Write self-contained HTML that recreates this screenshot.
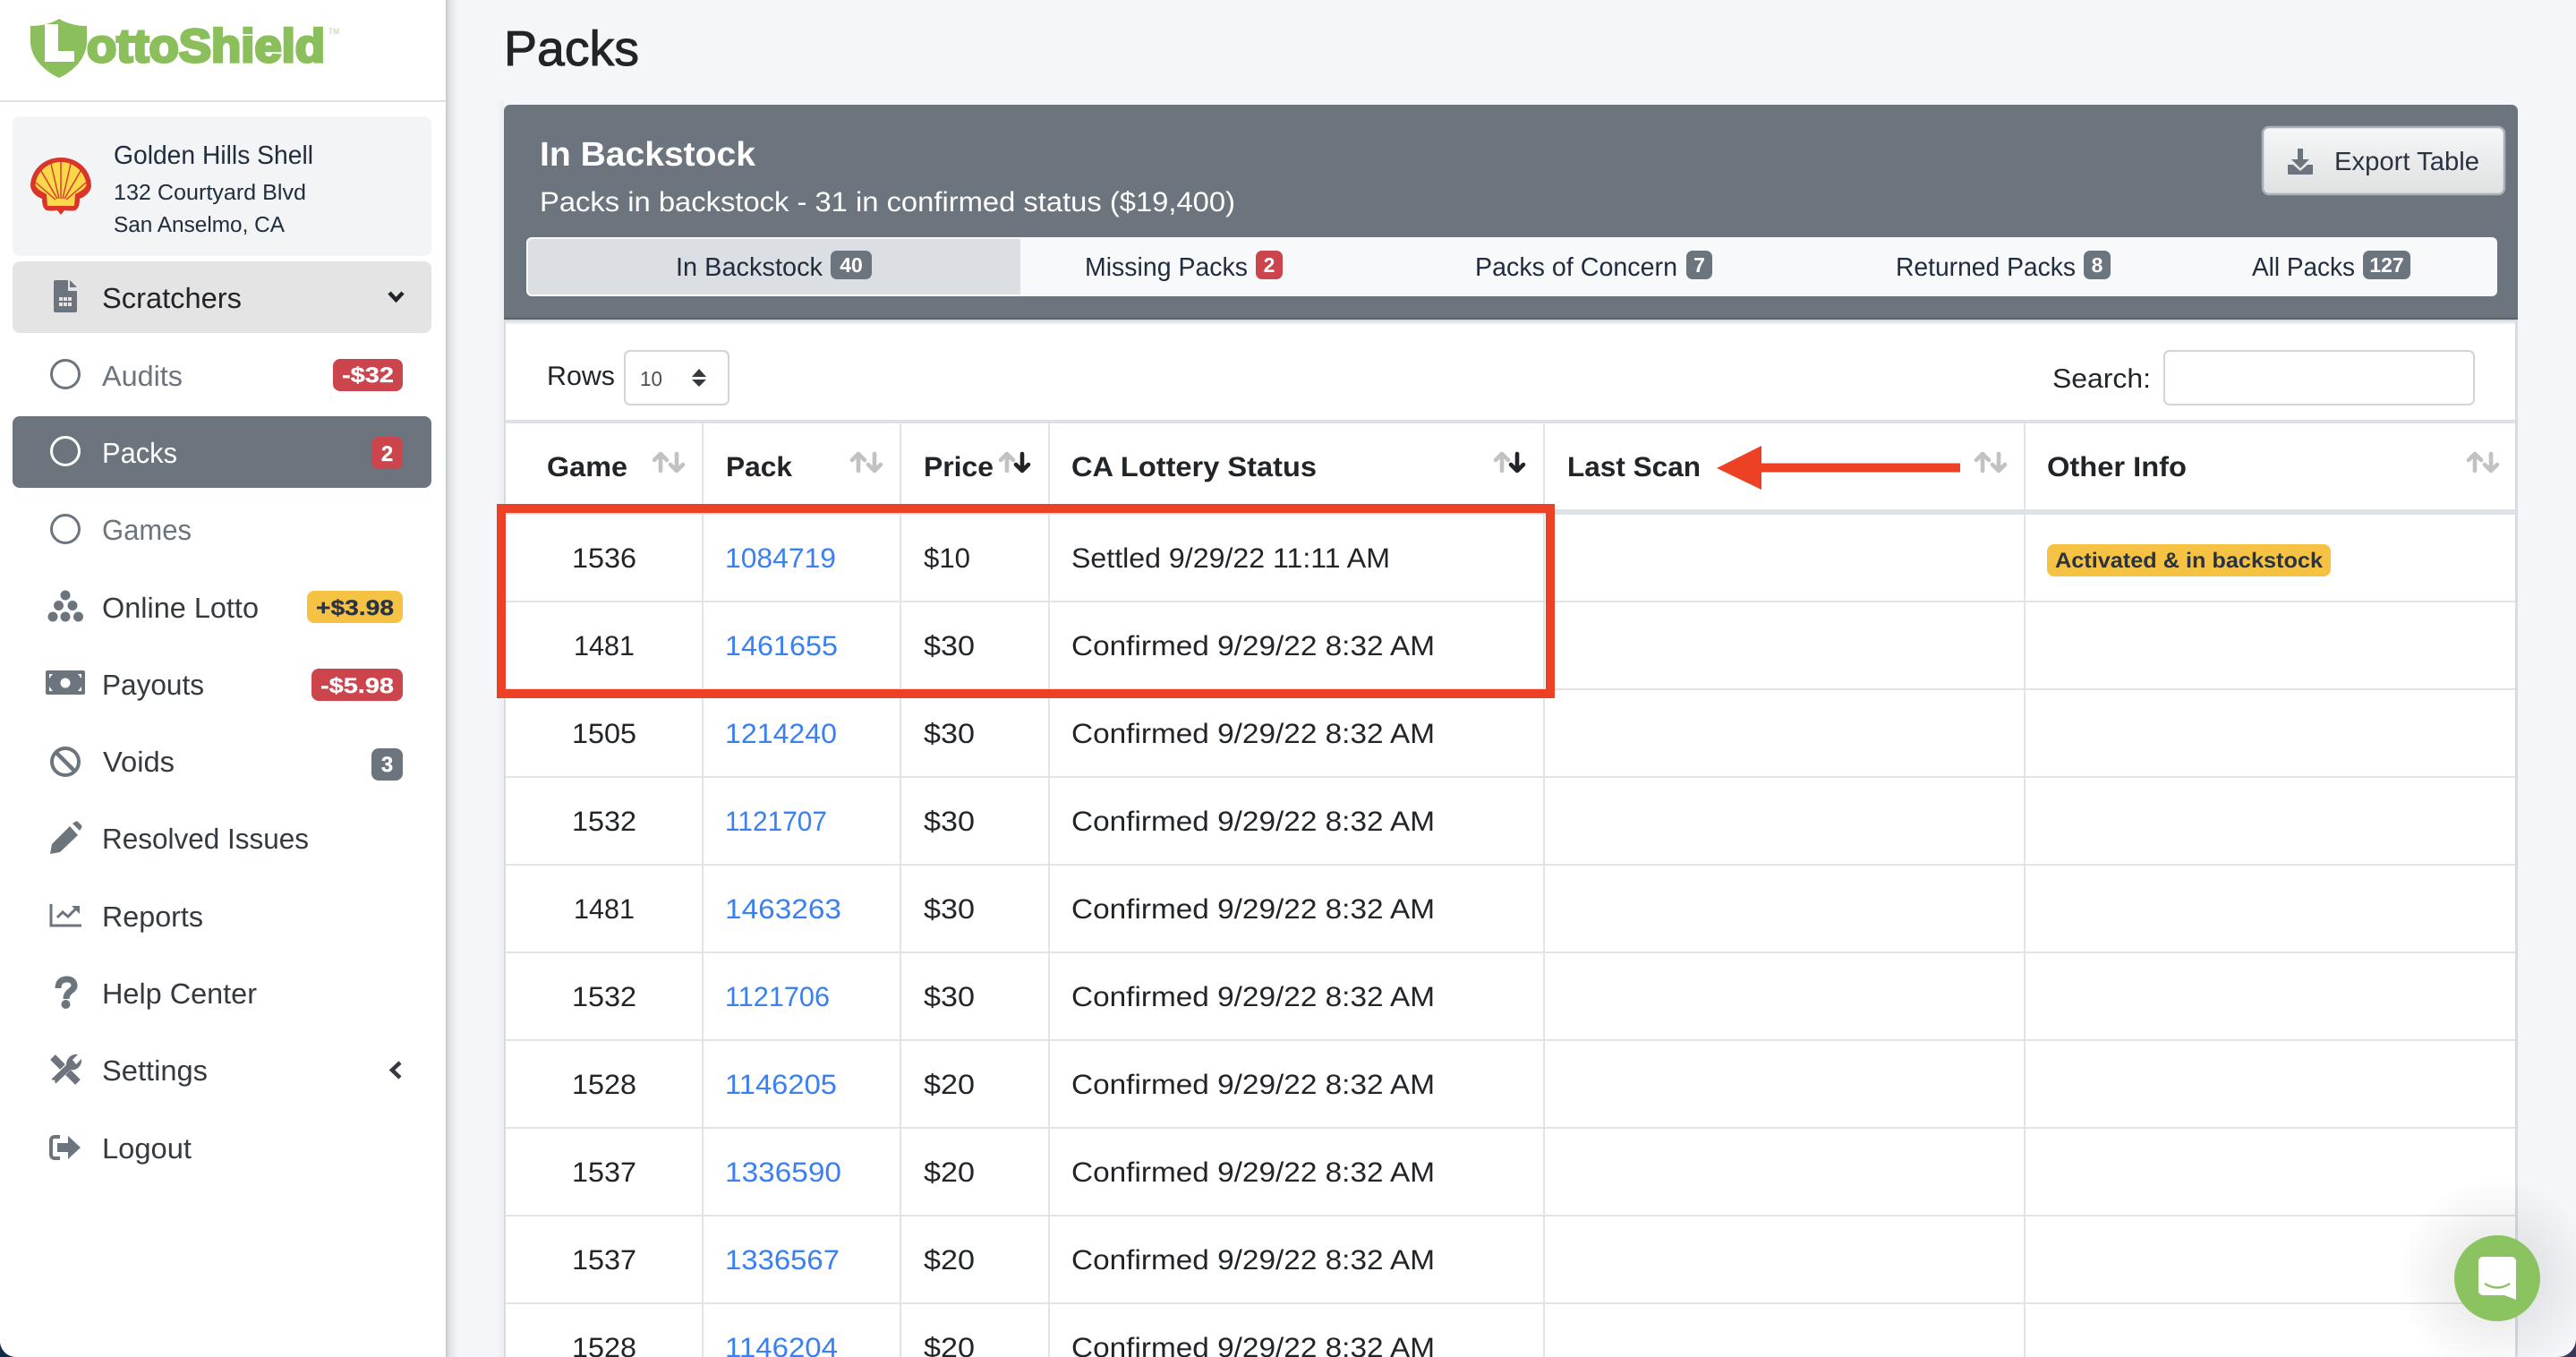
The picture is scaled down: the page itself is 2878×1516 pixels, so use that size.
<!DOCTYPE html>
<html lang="en">
<head>
<meta charset="utf-8">
<title>Packs - LottoShield</title>
<style>
html,body{margin:0;padding:0;background:#f4f6f9;width:2878px;height:1516px;overflow:hidden}
svg{display:block}
text{font-family:"Liberation Sans",sans-serif;text-rendering:geometricPrecision;white-space:pre}
.nav{font-size:32px;fill:#343a40}
.mut{font-size:32px;fill:#6c757d}
.bdg{font-size:24px;font-weight:700;fill:#fff;stroke:#fff;stroke-width:.3}
.tab{font-size:29px;fill:#212d3d}
.tb{font-size:23px;font-weight:700;fill:#fff}
.th{font-size:31px;font-weight:700;fill:#212529}
.td{font-size:31px;fill:#212529}
.lk{font-size:31px;fill:#3a80f2}
.up,.dn{fill:none;stroke:#c2c2c2;stroke-width:4.600;stroke-linecap:round;stroke-linejoin:round}
.dk{fill:none;stroke:#212529;stroke-width:4.600;stroke-linecap:round;stroke-linejoin:round}
</style>
</head>
<body>
<svg xmlns="http://www.w3.org/2000/svg" width="2878" height="1516" viewBox="0 0 2878 1516">
<defs>
<linearGradient id="btn" x1="0" y1="0" x2="0" y2="1"><stop offset="0" stop-color="#f6f7f8"/><stop offset="1" stop-color="#dfe1e1"/></linearGradient>
<linearGradient id="sb" x1="0" y1="0" x2="1" y2="0"><stop offset="0" stop-color="#c4c9d0"/><stop offset=".3" stop-color="#dfe2e8"/><stop offset="1" stop-color="#f4f6f9"/></linearGradient>
<linearGradient id="cs" x1="0" y1="0" x2="1" y2="0"><stop offset="0" stop-color="#f4f6f9"/><stop offset="1" stop-color="#d8dbe0"/></linearGradient>
<linearGradient id="hs" x1="0" y1="0" x2="0" y2="1"><stop offset="0" stop-color="#cfd2d6"/><stop offset="1" stop-color="#ffffff"/></linearGradient>
<radialGradient id="glow"><stop offset=".4" stop-color="#000" stop-opacity=".07"/><stop offset="1" stop-color="#000" stop-opacity="0"/></radialGradient>
</defs>

<!-- page -->
<rect width="2878" height="1516" fill="#f4f6f9"/>

<!-- sidebar -->
<rect x="498" y="0" width="14" height="1516" fill="url(#sb)"/>
<rect x="0" y="0" width="498" height="1516" fill="#fff"/>
<rect x="0" y="112" width="498" height="2" fill="#dee2e6"/>

<!-- logo -->
<path d="M66 21C56 27 45 29 34 29V46C34 63 47 78 66 87C85 78 97 63 97 46V29C86 29 76 27 66 21Z" fill="#8abf5b"/>
<path d="M50 27H65V57H83V69H50Z" fill="#fff"/>
<text x="97" y="69" font-size="52" font-weight="700" fill="#8abf5b" stroke="#8abf5b" stroke-width="3.200" textLength="266" lengthAdjust="spacingAndGlyphs">ottoShield</text>
<text x="367" y="38" font-size="9.500" fill="#b5d69a" textLength="12" lengthAdjust="spacingAndGlyphs">TM</text>

<!-- store card -->
<rect x="14" y="130" width="468" height="156" rx="8" fill="#f2f4f6"/>
<path d="M68 176C47 176 34 192 34 208C35 215 41 220 47 222C47 228 48 233 52 235C57 236 61 235 64 235L68 240L72 235C75 235 80 236 84 235C88 233 89 228 89 222C95 220 101 215 102 208C102 192 89 176 68 176Z" fill="#d9352b"/>
<path d="M68 181C51 181 40 195 39.500 207C42 212 47 214 52 217L53 230H83L84 217C89 214 94 212 96.500 207C96 195 85 181 68 181Z" fill="#fbd848"/>
<g stroke="#d9352b" stroke-width="1.400" fill="none">
<path d="M68 222V181"/><path d="M66 222L57 183"/><path d="M70 222L79 183"/><path d="M64 222L46 191"/><path d="M72 222L90 191"/><path d="M62 223L40 204"/><path d="M74 223L96 204"/>
</g>
<text x="127" y="183" font-size="29" fill="#212d3d" textLength="223" lengthAdjust="spacingAndGlyphs">Golden Hills Shell</text>
<text x="127" y="223" font-size="24.500" fill="#212d3d" textLength="215" lengthAdjust="spacingAndGlyphs">132 Courtyard Blvd</text>
<text x="127" y="259" font-size="24.500" fill="#212d3d" textLength="191" lengthAdjust="spacingAndGlyphs">San Anselmo, CA</text>

<!-- Scratchers -->
<rect x="14" y="292" width="468" height="80" rx="8" fill="#e4e4e4"/>
<path d="M62 313H76V325H86V347A2 2 0 0 1 84 349H62A2 2 0 0 1 60 347V315A2 2 0 0 1 62 313Z" fill="#6c757d"/>
<path d="M78 313L86 321H78Z" fill="#6c757d"/>
<g fill="#e4e4e4"><rect x="66" y="332" width="4" height="4"/><rect x="71" y="332" width="4" height="4"/><rect x="76" y="332" width="4" height="4"/><rect x="66" y="338" width="4" height="4"/><rect x="71" y="338" width="4" height="4"/><rect x="76" y="338" width="4" height="4"/></g>
<text x="114" y="344" font-size="32" fill="#212529" textLength="156" lengthAdjust="spacingAndGlyphs">Scratchers</text>
<path d="M435 327L442.500 335L450 327" fill="none" stroke="#212529" stroke-width="4.500"/>

<!-- Audits -->
<circle cx="73" cy="418" r="15.500" fill="none" stroke="#6c757d" stroke-width="3"/>
<text class="mut" x="114" y="431" textLength="90" lengthAdjust="spacingAndGlyphs">Audits</text>
<rect x="372" y="401" width="78" height="36" rx="8" fill="#cc444c"/>
<text class="bdg" x="382" y="427" textLength="58" lengthAdjust="spacingAndGlyphs">-$32</text>

<!-- Packs -->
<rect x="14" y="465" width="468" height="80" rx="8" fill="#6c757d"/>
<circle cx="73" cy="504" r="15.500" fill="none" stroke="#fff" stroke-width="3"/>
<text x="114" y="517" font-size="32" fill="#fff" textLength="84" lengthAdjust="spacingAndGlyphs">Packs</text>
<rect x="415" y="488" width="35" height="36" rx="8" fill="#cc444c"/>
<text class="bdg" x="432.500" y="515" text-anchor="middle">2</text>

<!-- Games -->
<circle cx="73" cy="591" r="15.500" fill="none" stroke="#6c757d" stroke-width="3"/>
<text class="mut" x="114" y="603" textLength="100" lengthAdjust="spacingAndGlyphs">Games</text>

<!-- Online Lotto -->
<g fill="#6c757d"><circle cx="73" cy="665" r="5.500"/><circle cx="65.500" cy="676.500" r="5.500"/><circle cx="81" cy="676.500" r="5.500"/><circle cx="59" cy="689" r="5.500"/><circle cx="73" cy="689" r="5.500"/><circle cx="87.500" cy="689" r="5.500"/></g>
<text class="nav" x="114" y="690" textLength="175" lengthAdjust="spacingAndGlyphs">Online Lotto</text>
<rect x="343" y="660" width="107" height="36" rx="8" fill="#f5c243"/>
<text class="bdg" x="353" y="687" style="fill:#2a3342;stroke:#2a3342" textLength="87" lengthAdjust="spacingAndGlyphs">+$3.98</text>

<!-- Payouts -->
<rect x="51" y="749" width="44" height="27" rx="2" fill="#6c757d"/>
<circle cx="73" cy="763" r="5.500" fill="#fff"/>
<g fill="#fff"><path d="M55 753H59L55 758Z"/><path d="M91 753H87L91 758Z"/><path d="M55 772H59L55 767Z"/><path d="M91 772H87L91 767Z"/></g>
<text class="nav" x="114" y="776" textLength="114" lengthAdjust="spacingAndGlyphs">Payouts</text>
<rect x="348" y="747" width="102" height="36" rx="8" fill="#cc444c"/>
<text class="bdg" x="358" y="774" textLength="82" lengthAdjust="spacingAndGlyphs">-$5.98</text>

<!-- Voids -->
<circle cx="73" cy="851" r="15" fill="none" stroke="#6c757d" stroke-width="4"/>
<path d="M62.500 840.500L83.500 861.500" stroke="#6c757d" stroke-width="4.500"/>
<text class="nav" x="115" y="862" textLength="80" lengthAdjust="spacingAndGlyphs">Voids</text>
<rect x="415" y="836" width="35" height="36" rx="8" fill="#6c757d"/>
<text class="bdg" x="432.500" y="862" text-anchor="middle">3</text>

<!-- Resolved Issues -->
<path d="M56 954L58 943L78 923L87 933L67 952Z" fill="#6c757d"/>
<path d="M81 920L84 918Q86 917 87 918L91 922Q92 924 91 925L89 928Z" fill="#6c757d"/>
<text class="nav" x="114" y="948" textLength="231" lengthAdjust="spacingAndGlyphs">Resolved Issues</text>

<!-- Reports -->
<path d="M57 1010V1034H91" fill="none" stroke="#6c757d" stroke-width="3"/>
<path d="M64 1025L70 1019L76 1024L85 1015" fill="none" stroke="#6c757d" stroke-width="3"/>
<path d="M80 1012H89V1021Z" fill="#6c757d"/>
<text class="nav" x="114" y="1035" textLength="113" lengthAdjust="spacingAndGlyphs">Reports</text>

<!-- Help -->
<path d="M65 1104C65 1096 70 1094 75 1094C81 1094 83 1098 83 1101C83 1107 74 1107 74 1116" fill="none" stroke="#6c757d" stroke-width="7"/>
<circle cx="73.500" cy="1122" r="5" fill="#6c757d"/>
<text class="nav" x="114" y="1121" textLength="173" lengthAdjust="spacingAndGlyphs">Help Center</text>

<!-- Settings -->
<path d="M59 1181L70 1192" stroke="#6c757d" stroke-width="8"/>
<path d="M76 1198L87 1209" stroke="#6c757d" stroke-width="8"/>
<path d="M60 1208L81 1188" stroke="#6c757d" stroke-width="7"/>
<path d="M74 1190C74 1182 80 1177 87 1178L81 1184L85 1189L91 1183C92 1191 85 1197 78 1195Z" fill="#6c757d"/>
<circle cx="60" cy="1208" r="1.500" fill="#fff"/>
<text class="nav" x="114" y="1207" textLength="118" lengthAdjust="spacingAndGlyphs">Settings</text>
<path d="M447 1187L438 1195.500L447 1204" fill="none" stroke="#343a40" stroke-width="4.500"/>

<!-- Logout -->
<path d="M67 1270H61A4 4 0 0 0 57 1274V1290A4 4 0 0 0 61 1294H67" fill="none" stroke="#6c757d" stroke-width="4"/>
<path d="M64 1277H76V1269L90 1282L76 1295V1287H64Z" fill="#6c757d"/>
<text class="nav" x="114" y="1294" textLength="100" lengthAdjust="spacingAndGlyphs">Logout</text>

<!-- title -->
<text x="563" y="73" font-size="55" fill="#212529" stroke="#212529" stroke-width="1" textLength="151" lengthAdjust="spacingAndGlyphs">Packs</text>

<!-- card -->
<rect x="555" y="112" width="8" height="1404" fill="url(#cs)" opacity=".3"/>
<rect x="563" y="117" width="2250" height="1410" rx="7" fill="#d8dbe0"/>
<rect x="565" y="120" width="2245" height="1400" fill="#fff"/>
<path d="M563 357V124A7 7 0 0 1 570 117H2806A7 7 0 0 1 2813 124V357Z" fill="#6c757d"/>
<rect x="563" y="355" width="2250" height="2" fill="#5c636a"/>
<rect x="565" y="357" width="2245" height="6" fill="url(#hs)"/>
<text x="603" y="185" font-size="38" font-weight="700" fill="#fff" textLength="241" lengthAdjust="spacingAndGlyphs">In Backstock</text>
<text x="603" y="236" font-size="31" fill="#fff" textLength="777" lengthAdjust="spacingAndGlyphs">Packs in backstock - 31 in confirmed status ($19,400)</text>

<!-- export -->
<rect x="2528" y="142" width="270" height="75" rx="7" fill="url(#btn)" stroke="#a9b0b6" stroke-width="2.500"/>
<path d="M2567 166H2573V178H2580L2570 188L2560 178H2567Z" fill="#6c757d"/>
<path d="M2556 184H2562L2570 191L2578 184H2584V194A1 1 0 0 1 2583 195H2557A1 1 0 0 1 2556 194Z" fill="#6c757d"/>
<text x="2608" y="190" font-size="29" fill="#2a3342" textLength="162" lengthAdjust="spacingAndGlyphs">Export Table</text>

<!-- tabs -->
<rect x="588" y="265" width="2202" height="66" rx="6" fill="#f8f9fa"/>
<path d="M1140 267H594A4 4 0 0 0 590 271V325A4 4 0 0 0 594 329H1140Z" fill="#dbdfe3"/>
<text class="tab" x="755" y="308" textLength="164" lengthAdjust="spacingAndGlyphs">In Backstock</text>
<rect x="928" y="280" width="46" height="32" rx="7" fill="#6c757d"/>
<text class="tb" x="951" y="304" text-anchor="middle">40</text>
<text class="tab" x="1212" y="308" textLength="182" lengthAdjust="spacingAndGlyphs">Missing Packs</text>
<rect x="1403" y="280" width="30" height="32" rx="7" fill="#cc444c"/>
<text class="tb" x="1418" y="304" text-anchor="middle">2</text>
<text class="tab" x="1648" y="308" textLength="226" lengthAdjust="spacingAndGlyphs">Packs of Concern</text>
<rect x="1884" y="280" width="29" height="32" rx="7" fill="#6c757d"/>
<text class="tb" x="1898.500" y="304" text-anchor="middle">7</text>
<text class="tab" x="2118" y="308" textLength="201" lengthAdjust="spacingAndGlyphs">Returned Packs</text>
<rect x="2328" y="280" width="30" height="32" rx="7" fill="#6c757d"/>
<text class="tb" x="2343" y="304" text-anchor="middle">8</text>
<text class="tab" x="2516" y="308" textLength="115" lengthAdjust="spacingAndGlyphs">All Packs</text>
<rect x="2640" y="280" width="53" height="32" rx="7" fill="#6c757d"/>
<text class="tb" x="2666.500" y="304" text-anchor="middle">127</text>

<!-- rows control -->
<text x="611" y="430" font-size="30" fill="#212529" textLength="76" lengthAdjust="spacingAndGlyphs">Rows</text>
<rect x="698" y="392" width="116" height="60" rx="6" fill="#fff" stroke="#ced4da" stroke-width="2"/>
<text x="715" y="431" font-size="23" fill="#495057" textLength="25" lengthAdjust="spacingAndGlyphs">10</text>
<path d="M773 421L781 412L789 421Z M773 424L781 432L789 424Z" fill="#343a40"/>
<text x="2293" y="433" font-size="30" fill="#212529" textLength="110" lengthAdjust="spacingAndGlyphs">Search:</text>
<rect x="2418" y="392" width="346" height="60" rx="6" fill="#fff" stroke="#ced4da" stroke-width="2"/>

<!-- table lines -->
<rect x="565" y="469" width="2245" height="4" fill="#dee2e6"/>
<rect x="565" y="569" width="2245" height="6" fill="#dee2e6"/>
<g fill="#e1e4e8">
<rect x="565" y="671" width="2245" height="2"/><rect x="565" y="769" width="2245" height="2"/><rect x="565" y="867" width="2245" height="2"/><rect x="565" y="965" width="2245" height="2"/><rect x="565" y="1063" width="2245" height="2"/><rect x="565" y="1161" width="2245" height="2"/><rect x="565" y="1259" width="2245" height="2"/><rect x="565" y="1357" width="2245" height="2"/><rect x="565" y="1455" width="2245" height="2"/>
<rect x="784" y="473" width="2" height="1043"/><rect x="1005" y="473" width="2" height="1043"/><rect x="1171" y="473" width="2" height="1043"/><rect x="1724" y="473" width="2" height="1043"/><rect x="2261" y="473" width="2" height="1043"/>
</g>

<!-- table head -->
<text class="th" x="611" y="532" textLength="90" lengthAdjust="spacingAndGlyphs">Game</text>
<text class="th" x="811" y="532" textLength="74" lengthAdjust="spacingAndGlyphs">Pack</text>
<text class="th" x="1032" y="532" textLength="78" lengthAdjust="spacingAndGlyphs">Price</text>
<text class="th" x="1197" y="532" textLength="274" lengthAdjust="spacingAndGlyphs">CA Lottery Status</text>
<text class="th" x="1751" y="532" textLength="149" lengthAdjust="spacingAndGlyphs">Last Scan</text>
<text class="th" x="2287" y="532" textLength="156" lengthAdjust="spacingAndGlyphs">Other Info</text>

<!-- sort arrows -->
<path class="up" d="M738 526V507M731 514L738 507L745 514"/><path class="dn" d="M756 507V526M749 519L756 526L763 519"/>
<path class="up" d="M959 526V507M952 514L959 507L966 514"/><path class="dn" d="M977 507V526M970 519L977 526L984 519"/>
<path class="up" d="M1125 526V507M1118 514L1125 507L1132 514"/><path class="dk" d="M1142 507V526M1135 519L1142 526L1149 519"/>
<path class="up" d="M1678 526V507M1671 514L1678 507L1685 514"/><path class="dk" d="M1695 507V526M1688 519L1695 526L1702 519"/>
<path class="up" d="M2215 526V507M2208 514L2215 507L2222 514"/><path class="dn" d="M2233 507V526M2226 519L2233 526L2240 519"/>
<path class="up" d="M2765 526V507M2758 514L2765 507L2772 514"/><path class="dn" d="M2783 507V526M2776 519L2783 526L2790 519"/>

<!-- rows -->
<text class="td" x="639" y="634" textLength="72" lengthAdjust="spacingAndGlyphs">1536</text><text class="lk" x="810" y="634" textLength="124" lengthAdjust="spacingAndGlyphs">1084719</text><text class="td" x="1032" y="634" textLength="52" lengthAdjust="spacingAndGlyphs">$10</text><text class="td" x="1197" y="634" textLength="356" lengthAdjust="spacingAndGlyphs">Settled 9/29/22 11:11 AM</text>
<text class="td" x="641" y="732" textLength="68" lengthAdjust="spacingAndGlyphs">1481</text><text class="lk" x="810" y="732" textLength="126" lengthAdjust="spacingAndGlyphs">1461655</text><text class="td" x="1032" y="732" textLength="57" lengthAdjust="spacingAndGlyphs">$30</text><text class="td" x="1197" y="732" textLength="406" lengthAdjust="spacingAndGlyphs">Confirmed 9/29/22 8:32 AM</text>
<text class="td" x="639" y="830" textLength="72" lengthAdjust="spacingAndGlyphs">1505</text><text class="lk" x="810" y="830" textLength="125" lengthAdjust="spacingAndGlyphs">1214240</text><text class="td" x="1032" y="830" textLength="57" lengthAdjust="spacingAndGlyphs">$30</text><text class="td" x="1197" y="830" textLength="406" lengthAdjust="spacingAndGlyphs">Confirmed 9/29/22 8:32 AM</text>
<text class="td" x="639" y="928" textLength="72" lengthAdjust="spacingAndGlyphs">1532</text><text class="lk" x="810" y="928" textLength="114" lengthAdjust="spacingAndGlyphs">1121707</text><text class="td" x="1032" y="928" textLength="57" lengthAdjust="spacingAndGlyphs">$30</text><text class="td" x="1197" y="928" textLength="406" lengthAdjust="spacingAndGlyphs">Confirmed 9/29/22 8:32 AM</text>
<text class="td" x="641" y="1026" textLength="68" lengthAdjust="spacingAndGlyphs">1481</text><text class="lk" x="810" y="1026" textLength="130" lengthAdjust="spacingAndGlyphs">1463263</text><text class="td" x="1032" y="1026" textLength="57" lengthAdjust="spacingAndGlyphs">$30</text><text class="td" x="1197" y="1026" textLength="406" lengthAdjust="spacingAndGlyphs">Confirmed 9/29/22 8:32 AM</text>
<text class="td" x="639" y="1124" textLength="72" lengthAdjust="spacingAndGlyphs">1532</text><text class="lk" x="810" y="1124" textLength="117" lengthAdjust="spacingAndGlyphs">1121706</text><text class="td" x="1032" y="1124" textLength="57" lengthAdjust="spacingAndGlyphs">$30</text><text class="td" x="1197" y="1124" textLength="406" lengthAdjust="spacingAndGlyphs">Confirmed 9/29/22 8:32 AM</text>
<text class="td" x="639" y="1222" textLength="72" lengthAdjust="spacingAndGlyphs">1528</text><text class="lk" x="810" y="1222" textLength="125" lengthAdjust="spacingAndGlyphs">1146205</text><text class="td" x="1032" y="1222" textLength="57" lengthAdjust="spacingAndGlyphs">$20</text><text class="td" x="1197" y="1222" textLength="406" lengthAdjust="spacingAndGlyphs">Confirmed 9/29/22 8:32 AM</text>
<text class="td" x="639" y="1320" textLength="72" lengthAdjust="spacingAndGlyphs">1537</text><text class="lk" x="810" y="1320" textLength="130" lengthAdjust="spacingAndGlyphs">1336590</text><text class="td" x="1032" y="1320" textLength="57" lengthAdjust="spacingAndGlyphs">$20</text><text class="td" x="1197" y="1320" textLength="406" lengthAdjust="spacingAndGlyphs">Confirmed 9/29/22 8:32 AM</text>
<text class="td" x="639" y="1418" textLength="72" lengthAdjust="spacingAndGlyphs">1537</text><text class="lk" x="810" y="1418" textLength="128" lengthAdjust="spacingAndGlyphs">1336567</text><text class="td" x="1032" y="1418" textLength="57" lengthAdjust="spacingAndGlyphs">$20</text><text class="td" x="1197" y="1418" textLength="406" lengthAdjust="spacingAndGlyphs">Confirmed 9/29/22 8:32 AM</text>
<text class="td" x="639" y="1516" textLength="72" lengthAdjust="spacingAndGlyphs">1528</text><text class="lk" x="810" y="1516" textLength="126" lengthAdjust="spacingAndGlyphs">1146204</text><text class="td" x="1032" y="1516" textLength="57" lengthAdjust="spacingAndGlyphs">$20</text><text class="td" x="1197" y="1516" textLength="406" lengthAdjust="spacingAndGlyphs">Confirmed 9/29/22 8:32 AM</text>

<!-- other info badge -->
<rect x="2287" y="608" width="317" height="36" rx="8" fill="#f5c243"/>
<text x="2296" y="634" font-size="24" font-weight="700" fill="#2a3342" textLength="299" lengthAdjust="spacingAndGlyphs">Activated &amp; in backstock</text>

<!-- annotations -->
<rect x="560" y="568" width="1172" height="207" fill="none" stroke="#ec4125" stroke-width="10"/>
<path d="M1918 523L1968 498V517.500H2190V527.500H1968V547Z" fill="#ec4125"/>

<!-- chat widget -->
<circle cx="2790" cy="1428" r="112" fill="url(#glow)"/>
<circle cx="2790" cy="1428" r="48" fill="#8bc360"/>
<path d="M2774 1404H2806A5 5 0 0 1 2811 1409V1452L2798 1447H2774A5 5 0 0 1 2769 1442V1409A5 5 0 0 1 2774 1404Z" fill="#fff"/>
<path d="M2776 1434Q2790 1443 2804 1434" fill="none" stroke="#8bc360" stroke-width="2.500"/>

<!-- window corners -->
<path d="M0 1500V1516H18A18 18 0 0 1 0 1500Z" fill="#0f2a45"/>
<path d="M2878 1496V1516H2858A20 20 0 0 0 2878 1496Z" fill="#3a3458"/>
</svg>
</body>
</html>
